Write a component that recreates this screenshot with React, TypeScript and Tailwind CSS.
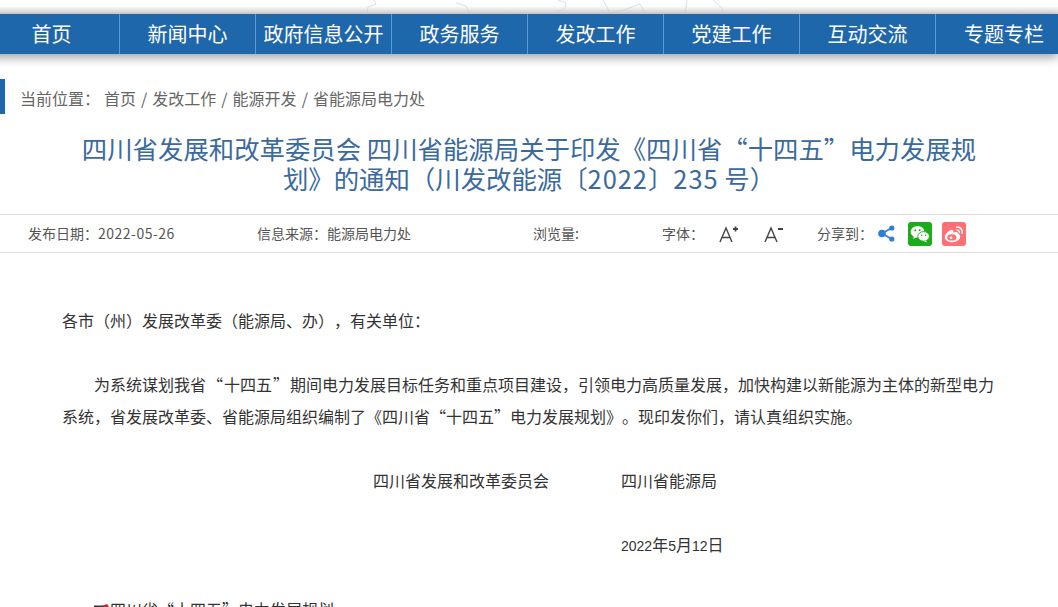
const navItems = ["首页", "新闻中心", "政府信息公开", "政务服务", "发改工作", "党建工作", "互动交流", "专题专栏"];

function FontSizeIcon({ minus }: { minus?: boolean }) {
  return (
    <svg width="20" height="20" viewBox="0 0 20 20" fill="none" stroke="#444444" strokeWidth="1.4">
      <path d="M1 18 L7 4 L13 18 M3 13.5 H11" />
      {minus ? <path d="M14 5 H19" strokeWidth="2" /> : <path d="M14 5 H19 M16.5 2.5 V7.5" strokeWidth="1.8" />}
    </svg>
  );
}

function ShareIcon() {
  return (
    <svg width="17" height="17" viewBox="0 0 17 17" className="mr-[13px] shrink-0">
      <path d="M4 8.5 L13.5 3 M4 8.5 L13.5 14" stroke="#2b7fd9" strokeWidth="1.6" />
      <circle cx="4" cy="8.5" r="3.8" fill="#2b7fd9" />
      <circle cx="13.8" cy="3" r="2.6" fill="#2b7fd9" />
      <circle cx="13.8" cy="14" r="2.6" fill="#2b7fd9" />
    </svg>
  );
}

function WechatIcon() {
  return (
    <svg width="24" height="24" viewBox="0 0 24 24" className="shrink-0 mr-[10px]">
      <rect width="24" height="24" rx="3" fill="#1aad19" />
      <ellipse cx="9.6" cy="9.8" rx="7" ry="5.8" fill="white" />
      <path d="M6 14 L5.2 17 L9 15" fill="white" />
      <ellipse cx="15.6" cy="14.4" rx="5.8" ry="4.8" fill="white" stroke="#1aad19" strokeWidth="0.9" />
      <path d="M18 18.4 L19 20.6 L15.6 19" fill="white" />
      <circle cx="7.3" cy="8.2" r="1" fill="#1aad19" />
      <circle cx="11.6" cy="8.2" r="1" fill="#1aad19" />
      <circle cx="13.6" cy="13.2" r="0.8" fill="#1aad19" />
      <circle cx="17.6" cy="13.2" r="0.8" fill="#1aad19" />
    </svg>
  );
}

function WeiboIcon() {
  return (
    <svg width="24" height="24" viewBox="0 0 24 24" className="shrink-0" fill="none">
      <rect width="24" height="24" rx="3" fill="#ff6f73" />
      <path d="M10.4 20.2 C6 20.2 2.8 18 2.8 15.2 C2.8 12.2 7 8 9.8 7.8 C11.4 7.8 11.6 9.2 11.2 10.6 C13.2 9.8 15.8 9.8 15.8 11.6 C17.4 12.2 18.2 13.2 18.2 14.6 C18.2 17.8 14.6 20.2 10.4 20.2 Z" fill="white" />
      <ellipse cx="9.8" cy="15.4" rx="4.6" ry="3.2" fill="#ff6f73" />
      <circle cx="9" cy="15.8" r="1.4" fill="white" />
      <path d="M14.6 5.2 C18 4.6 21 7.6 20.2 11.2" stroke="white" strokeWidth="1.6" strokeLinecap="round" />
      <path d="M15 8.2 C16.4 8 17.6 9.2 17.2 10.6" stroke="white" strokeWidth="1.3" strokeLinecap="round" />
    </svg>
  );
}

const num = "font-['Liberation_Sans',sans-serif] text-[14px]";

export default function App() {
  return (
    <div lang="zh-CN" className="w-[1058px] h-[607px] overflow-hidden bg-white font-['Noto_Sans_CJK_SC','Liberation_Sans',sans-serif] [text-spacing-trim:space-all]">
      {/* faint map lines behind the header */}
      <div className="h-[14px] bg-gradient-to-b from-white from-40% to-[#dcdcdc] overflow-hidden">
        <svg width="1058" height="14" fill="none" stroke="#dedede" strokeWidth="1">
          <path d="M367 14 L368 7 L376 4 L374 0" />
          <path d="M456 3 L466 6 L470 14" />
          <path d="M553 14 L565 8 L566 3 L558 0" />
          <path d="M603 0 L610 13 L624 10 L640 4 L646 14" />
          <path d="M687 0 L685 14" />
          <path d="M713 0 L722 8 L723 14" />
        </svg>
      </div>

      <nav className="relative flex h-[40px] -ml-[16px] w-[1074px] bg-[#1f67ab] shadow-[0_3px_10px_rgba(0,0,0,0.4)]">
        {navItems.map((item, i) => (
          <div
            key={item}
            className={`w-[136px] shrink-0 flex items-center justify-center text-[20px] text-white ${i < navItems.length - 1 ? "border-r border-[#5a9bd6]" : ""}`}
          >
            {item}
          </div>
        ))}
      </nav>

      <div className="flex items-center h-[35px] mt-[25px] border-l-[5px] border-[#1f67ab] pl-[15px] pt-[2px] text-[16px] text-[#666666]">
        <span className="mr-[4px]">当前位置：</span>
        <span>首页</span>
        <span className="mx-[5px]">/</span>
        <span>发改工作</span>
        <span className="mx-[5px]">/</span>
        <span>能源开发</span>
        <span className="mx-[5px]">/</span>
        <span>省能源局电力处</span>
      </div>

      <h1 className="mx-auto mt-[19px] w-[900px] text-center text-[25.4px] leading-[30px] text-[#3a6a9e]">
        四川省发展和改革委员会 四川省能源局关于印发《四川省“十四五”电力发展规
        <br />
        划》的通知（川发改能源〔<span className="tracking-[1px]">2022</span>〕<span className="tracking-[1px]">235</span> 号）
      </h1>

      <div className="flex items-center h-[39px] mt-[21px] border-t border-b border-[#dddddd] text-[14px] text-[#555555]">
        <span className="ml-[28px] w-[229px]">发布日期：<span className="tracking-[0.5px]">2022-05-26</span></span>
        <span className="w-[276px]">信息来源：能源局电力处</span>
        <span className="w-[129px]">浏览量:</span>
        <span className="w-[57px]">字体：</span>
        <span className="w-[45px]"><FontSizeIcon /></span>
        <span className="w-[53px]"><FontSizeIcon minus /></span>
        <span className="w-[61px]">分享到：</span>
        <ShareIcon />
        <WechatIcon />
        <WeiboIcon />
      </div>

      <div className="px-[62px] pt-[51px] text-[16px] leading-[32px] text-[#333333]">
        <p>各市（州）发展改革委（能源局、办），有关单位：</p>
        <p className="mt-[32px] indent-[32px]">
          为系统谋划我省<span className="px-[1px]">“</span>十四五<span className="px-[1px]">”</span>期间电力发展目标任务和重点项目建设，引领电力高质量发展，加快构建以新能源为主体的新型电力
          <br />
          系统，省发展改革委、省能源局组织编制了《四川省“十四五”电力发展规划》。现印发你们，请认真组织实施。
        </p>
        <p className="mt-[32px] flex">
          <span className="ml-[311px] w-[248px]">四川省发展和改革委员会</span>
          <span>四川省能源局</span>
        </p>
        <p className="mt-[32px] ml-[559px]">
          <span className={num}>2022</span>年<span className={num}>5</span>月<span className={num}>12</span>日
        </p>
        <p className="mt-[31px] flex ml-[32px]">
          <svg width="16" height="32" viewBox="0 0 16 32" className="shrink-0">
            <path d="M0 13.5 H12" stroke="#333333" strokeWidth="2" />
            <path d="M9 12.5 L13 11 L15 14 V20 H9 Z" fill="#b03030" />
          </svg>
          <span>四川省“十四五”电力发展规划</span>
        </p>
      </div>
    </div>
  );
}
